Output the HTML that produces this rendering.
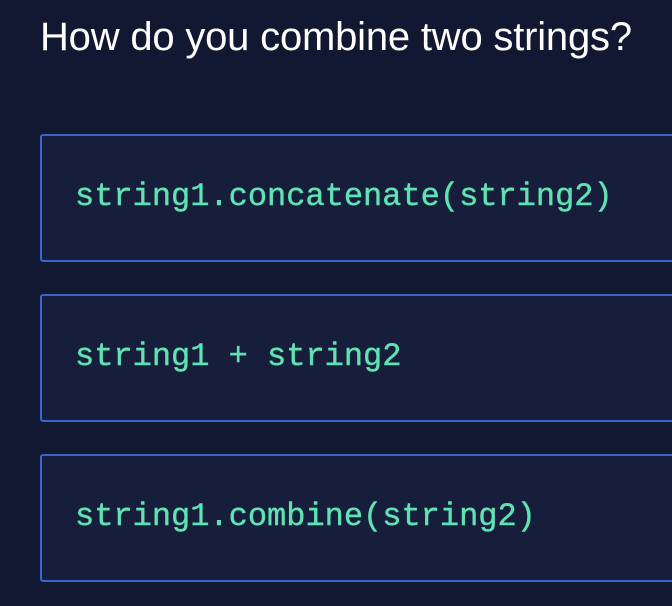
<!DOCTYPE html>
<html><head><style>
html,body{margin:0;padding:0;}
body{width:672px;height:606px;background:#121831;overflow:hidden;position:relative;font-family:"Liberation Sans",sans-serif;}
h1{position:absolute;left:40px;top:15px;margin:0;font-size:40px;font-weight:normal;color:#fff;letter-spacing:-0.2px;white-space:nowrap;}
.box{position:absolute;left:40px;width:660px;height:124px;border:2px solid #3a64c8;border-radius:3px;background:#161e3b;box-sizing:border-box;}
.box span{position:absolute;left:33px;top:42px;font-family:"Liberation Mono",monospace;font-size:32px;color:#5fe3b4;white-space:nowrap;-webkit-text-stroke:0.4px #5fe3b4;}
</style></head><body>
<h1>How do you combine two strings?</h1>
<div class="box" style="top:134px;height:128px"><span>string1.concatenate(string2)</span></div>
<div class="box" style="top:294px;height:128px"><span>string1 + string2</span></div>
<div class="box" style="top:454px;height:128px"><span>string1.combine(string2)</span></div>
</body></html>
